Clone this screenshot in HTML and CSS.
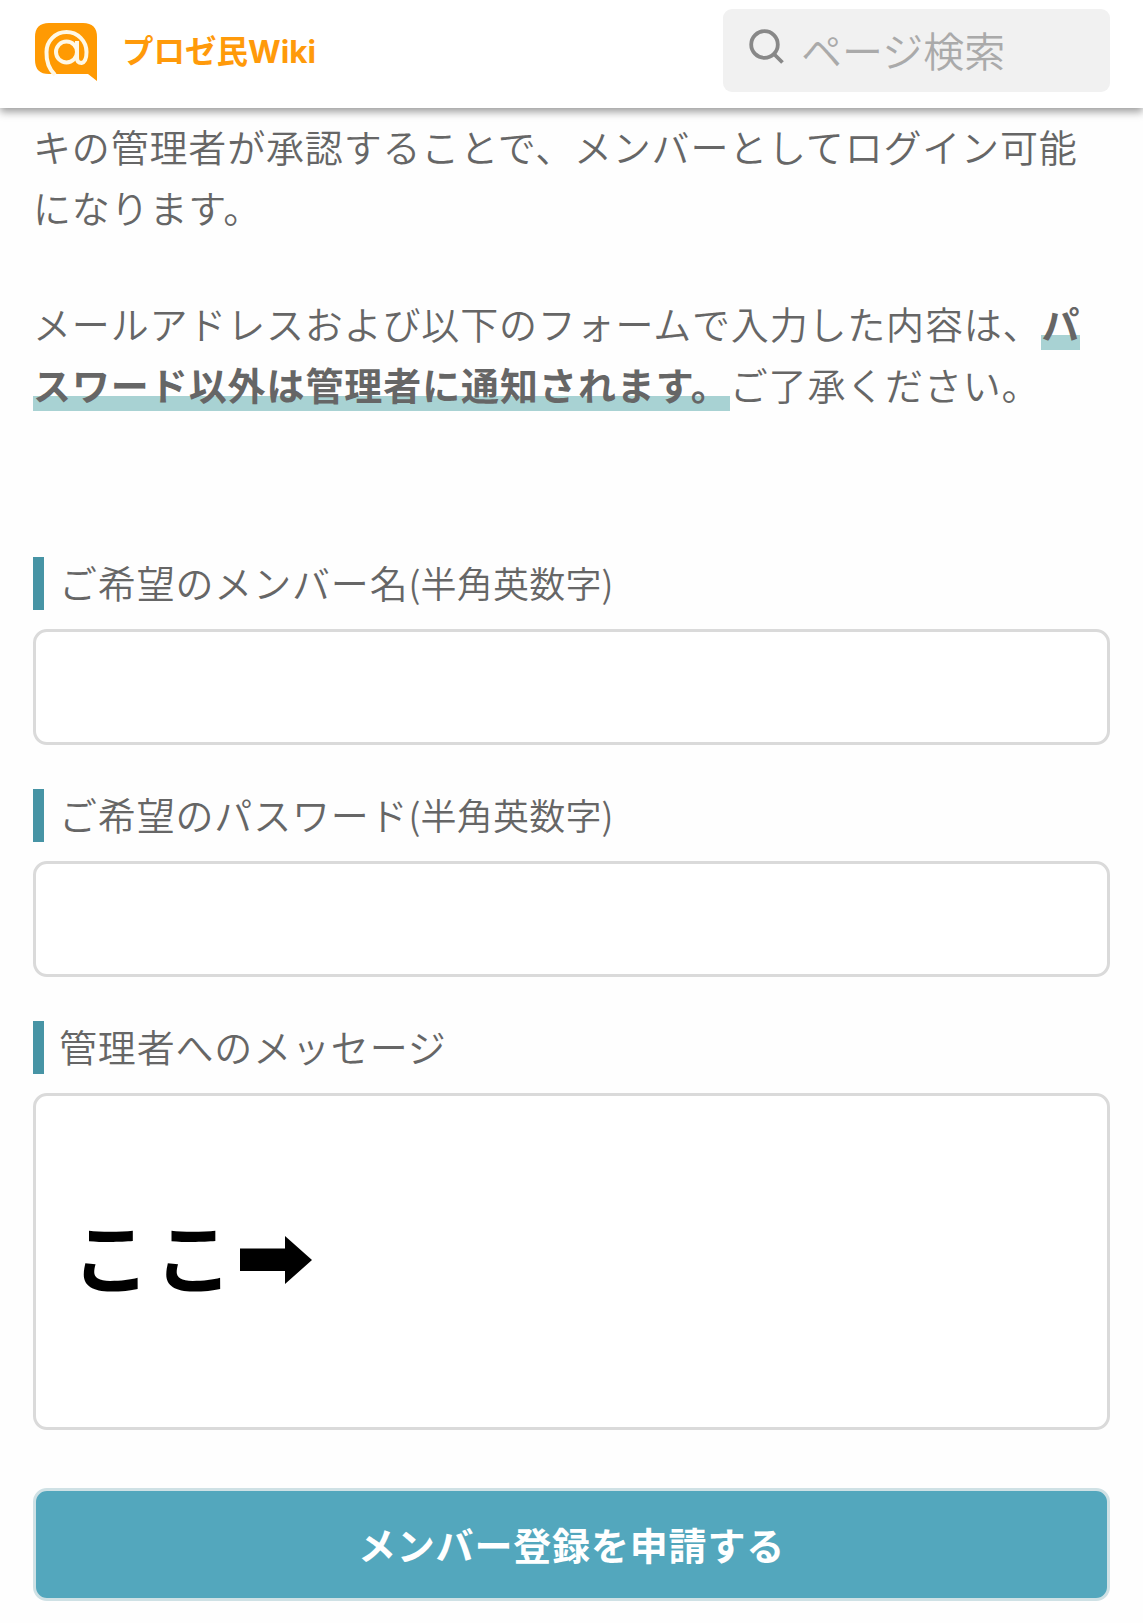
FILE: index.html
```html
<!DOCTYPE html>
<html lang="ja">
<head>
    <meta charset="UTF-8">
    <meta name="viewport" content="width=device-width, initial-scale=1.0">
    <title>プロゼ民Wiki</title>
    <link rel="stylesheet" href="styles.css">
</head>
<body>
    <header class="header">
        <a class="brand">
            <svg class="logo" viewBox="0 0 62 58">
                <path d="M14 0H48Q62 0 62 14V58L53 51H14Q0 51 0 37V14Q0 0 14 0Z" fill="#ff9a03"/>
                <g fill="none" stroke="#fff8e6" stroke-width="4">
                    <circle cx="31.500" cy="29" r="10.500"/>
                    <path d="M42 18V35Q42 40 46.500 40Q51.500 39 51.500 29A20 20 0 0 0 11.500 29Q11 43 20 52"/>
                </g>
            </svg>
            <span class="site-name">プロゼ民Wiki</span>
        </a>
        <div class="search">
            <svg class="search-icon" viewBox="0 0 36 36">
                <circle cx="15.500" cy="15.500" r="13.300"/>
                <path d="M25 25L33.500 33.500"/>
            </svg>
            <span class="search-text">ページ検索</span>
        </div>
    </header>

    <main class="main">
        <p>キの管理者が承認することで、メンバーとしてログイン可能<br>になります。</p>
        <p>メールアドレスおよび以下のフォームで入力した内容は、<strong class="marker">パ<br>スワード以外は管理者に通知されます。</strong>ご了承ください。</p>

        <form class="form">
            <label class="label">ご希望のメンバー名<span class="note">(半角英数字)</span></label>
            <div class="field"></div>

            <label class="label">ご希望のパスワード<span class="note">(半角英数字)</span></label>
            <div class="field"></div>

            <label class="label">管理者へのメッセージ</label>
            <div class="field message">
                <span class="here">ここ</span>
                <svg class="arrow" viewBox="0 0 72 48">
                    <path d="M0 12.500H45V0L72 24L45 48V35H0Z"/>
                </svg>
            </div>

            <button class="submit" type="button">メンバー登録を申請する</button>
        </form>
    </main>
</body>
</html>
```
FILE: styles.css
```css
* {
    box-sizing: border-box;
}

body {
    margin: 0;
    background: #fefefe;
    color: #666;
    font-family: "Noto Sans CJK JP", sans-serif;
    font-size: 38px;
    font-weight: 350;
    letter-spacing: 0.83px;
    line-height: 61px;
}

.header {
    display: flex;
    justify-content: space-between;
    height: 108px;
    padding: 9px 33px 0 35px;
    background: #fff;
    box-shadow: 0 4px 8px rgba(0, 0, 0, 0.38);
}

.brand {
    display: flex;
    align-items: center;
    height: 85px;
    color: #ff9a0a;
}

.logo {
    width: 62px;
    height: 58px;
    margin-right: 25px;
}

.site-name {
    font-family: Inter, "Noto Sans CJK JP", sans-serif;
    font-size: 31.5px;
    font-weight: 700;
    letter-spacing: 0;
}

.search {
    display: flex;
    align-items: center;
    width: 387px;
    height: 83px;
    padding-left: 26px;
    border-radius: 9px;
    background: #f1f1f1;
}

.search-icon {
    width: 36px;
    height: 36px;
    margin: 0 16px 8px 0;
    fill: none;
    stroke: #888;
    stroke-width: 3.8;
}

.search-text {
    margin-bottom: 3px;
    color: #aaa;
    font-size: 41px;
    letter-spacing: 0;
}

.main {
    padding: 7px 33px 0;
}

p {
    margin: 0 -20px 55px 0;
}

.marker {
    background: linear-gradient(to top, #a8d2d3 15px, transparent 15px);
    font-weight: 700;
    letter-spacing: 0.92px;
}

.form {
    margin-top: 143px;
}

.label {
    display: block;
    height: 53px;
    margin-bottom: 19px;
    padding-left: 15px;
    border-left: 11px solid #4794a5;
    line-height: 50px;
}

.note {
    font-size: 36px;
    letter-spacing: 0.2px;
}

.field {
    height: 116px;
    margin-bottom: 44px;
    border: 3px solid #dadada;
    border-radius: 14px;
    background: #fff;
}

.message {
    display: flex;
    align-items: center;
    height: 337px;
    margin-bottom: 58px;
    padding-left: 36px;
}

.here {
    margin-bottom: 14px;
    color: #000;
    font-size: 78px;
    font-weight: 700;
    letter-spacing: 4.6px;
}

.arrow {
    width: 72px;
    height: 48px;
    margin: 0 0 4px 3px;
}

.submit {
    display: block;
    width: 100%;
    height: 113px;
    padding-bottom: 4px;
    border: 3px solid #cfe1e5;
    border-radius: 14px;
    background: #53a7bd;
    color: #fff;
    font: inherit;
    font-weight: 700;
    letter-spacing: inherit;
}
```
